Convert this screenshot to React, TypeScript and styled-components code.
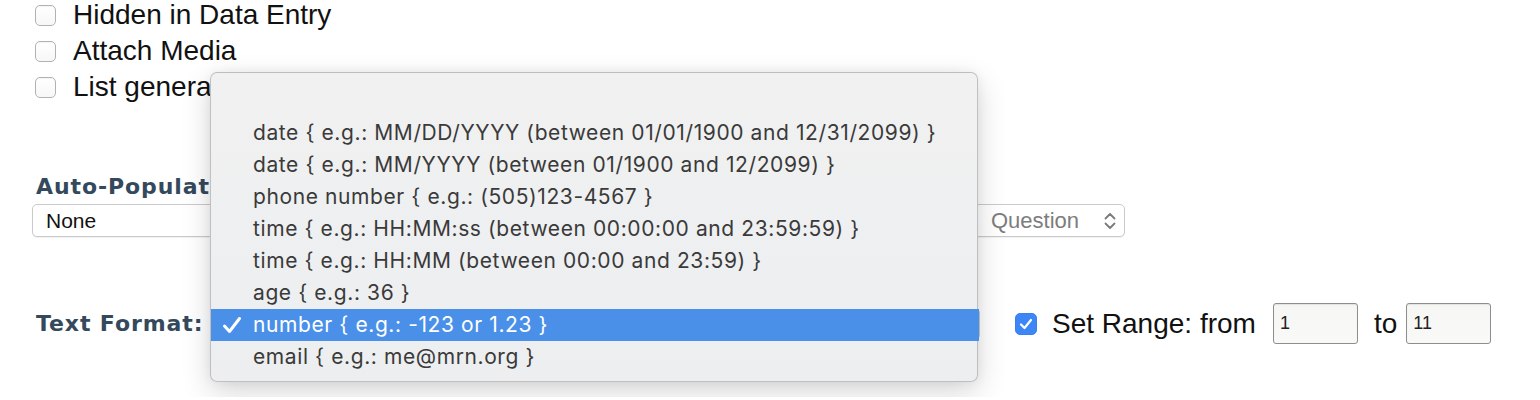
import React from "react";
import styled, { createGlobalStyle } from "styled-components";

const Global = createGlobalStyle`
  html, body { margin: 0; padding: 0; background: #ffffff; }
  body { font-family: "Liberation Sans", Arial, sans-serif; overflow: hidden; }
`;

const Page = styled.div`
  position: relative;
  width: 1540px;
  height: 400px;
  padding-left: 32px;
  box-sizing: border-box;
  background: #fff;
`;

const CheckList = styled.div`
  display: flex;
  flex-direction: column;
  margin-top: -3px;
  margin-left: 3px;
`;

const CheckRow = styled.label`
  display: flex;
  align-items: center;
  height: 36px;
  gap: 17px;
  font-size: 28px;
  color: #111;
  white-space: nowrap;
`;

const Box = styled.span<{ $checked?: boolean }>`
  flex: none;
  width: ${(p) => (p.$checked ? 22 : 21)}px;
  height: ${(p) => (p.$checked ? 22 : 21)}px;
  box-sizing: border-box;
  border-radius: 5px;
  border: 1px solid ${(p) => (p.$checked ? "#3a80f3" : "#b2b2b2")};
  background: ${(p) => (p.$checked ? "#3d86f6" : "linear-gradient(#ffffff, #f7f7f7)")};
  box-shadow: ${(p) => (p.$checked ? "none" : "inset 0 1px 1px rgba(0,0,0,0.04)")};
  display: flex;
  align-items: center;
  justify-content: center;
`;

const Section = styled.div`
  margin-top: 70px;
  display: flex;
  flex-direction: column;
`;

const FieldLabel = styled.div<{ $width?: number }>`
  font-family: "DejaVu Sans", Verdana, sans-serif;
  font-weight: bold;
  font-size: 22px;
  letter-spacing: 0.9px;
  line-height: 24px;
  color: #34495c;
  margin-left: 4px;
  white-space: nowrap;
  flex: none;
  ${(p) => (p.$width ? `width: ${p.$width}px;` : "")}
`;

const SelectRow = styled.div`
  display: flex;
  gap: 12px;
  width: 1093px;
  margin-top: 5px;
`;

const Select = styled.div<{ $width?: number; $muted?: boolean }>`
  ${(p) => (p.$width ? `width: ${p.$width}px; flex: none;` : "flex: 1;")}
  height: 33px;
  box-sizing: border-box;
  border: 1px solid #cacaca;
  border-radius: 5px;
  background: #fff;
  box-shadow: 0 1px 1px rgba(0, 0, 0, 0.06);
  display: flex;
  align-items: center;
  justify-content: space-between;
  padding: 0 7px 0 13px;
  font-size: ${(p) => (p.$muted ? 22 : 21)}px;
  color: ${(p) => (p.$muted ? "#7d7d7d" : "#111")};
`;

const QuestionText = styled.span`
  margin-left: auto;
  margin-right: 24px;
`;

const FormatRow = styled.div`
  display: flex;
  align-items: center;
  height: 41px;
  margin-top: 66px;
`;

const Anchor = styled.div`
  position: relative;
  flex: none;
  width: 770px;
  height: 32px;
`;

const HiddenSelect = styled.div`
  width: 100%;
  height: 32px;
  border: 1px solid #cacaca;
  border-radius: 5px;
  box-sizing: border-box;
  background: #fff;
`;

const Menu = styled.div`
  position: absolute;
  left: 0;
  top: -236px;
  width: 768px;
  box-sizing: border-box;
  padding: 12px 0 8px;
  background: linear-gradient(#f1f1f1, #eceef0);
  border: 1px solid rgba(0, 0, 0, 0.2);
  border-radius: 7px;
  box-shadow: 0 10px 30px rgba(0, 0, 0, 0.16), 0 0 12px rgba(0, 0, 0, 0.06);
  z-index: 10;
`;

const Item = styled.div<{ $selected?: boolean }>`
  position: relative;
  height: 32px;
  display: flex;
  align-items: center;
  padding-left: 42px;
  margin-right: ${(p) => (p.$selected ? "-2px" : "0")};
  font-family: Inter, "Noto Sans", sans-serif;
  font-size: 21px;
  letter-spacing: 0.6px;
  color: ${(p) => (p.$selected ? "#ffffff" : "#3a3a3a")};
  background: ${(p) => (p.$selected ? "#4a90e9" : "transparent")};
  white-space: nowrap;
`;

const Check = styled.svg`
  position: absolute;
  left: 11px;
  top: 7px;
`;

const RangeBox = styled.div`
  display: flex;
  align-items: center;
  margin-left: 35px;
  font-size: 28px;
  color: #111;
`;

const RangeText = styled.span<{ $ml: number; $mr: number }>`
  margin-left: ${(p) => p.$ml}px;
  margin-right: ${(p) => p.$mr}px;
  white-space: nowrap;
`;

const NumInput = styled.div<{ $width: number }>`
  width: ${(p) => p.$width}px;
  height: 41px;
  box-sizing: border-box;
  border: 1px solid #8e8e8e;
  border-radius: 3px;
  background: linear-gradient(#f6f6f4, #f9f9f7);
  display: flex;
  align-items: center;
  padding-left: 6px;
  font-size: 18px;
  color: #222;
  box-shadow: inset 0 1px 1px rgba(0, 0, 0, 0.08);
`;

const options = [
  "",
  "date { e.g.: MM/DD/YYYY (between 01/01/1900 and 12/31/2099) }",
  "date { e.g.: MM/YYYY (between 01/1900 and 12/2099) }",
  "phone number { e.g.: (505)123-4567 }",
  "time { e.g.: HH:MM:ss (between 00:00:00 and 23:59:59) }",
  "time { e.g.: HH:MM (between 00:00 and 23:59) }",
  "age { e.g.: 36 }",
  "number { e.g.: -123 or 1.23 }",
  "email { e.g.: me@mrn.org }",
];
const selectedIndex = 7;

const Chevrons = () => (
  <svg width="14" height="20" viewBox="0 0 14 20" fill="none" stroke="#7a7a7a" strokeWidth="1.8" strokeLinecap="round" strokeLinejoin="round">
    <path d="M2.5 7.5 L7 3 L11.5 7.5" />
    <path d="M2.5 12.5 L7 17 L11.5 12.5" />
  </svg>
);

export default function App() {
  return (
    <>
      <Global />
      <Page>
        <CheckList>
          <CheckRow><Box />Hidden in Data Entry</CheckRow>
          <CheckRow><Box />Attach Media</CheckRow>
          <CheckRow><Box />List generated from previous answers</CheckRow>
        </CheckList>

        <Section>
          <FieldLabel>Auto-Populate</FieldLabel>
          <SelectRow>
            <Select $width={540}>None</Select>
            <Select $muted>
              <QuestionText>Question</QuestionText>
              <Chevrons />
            </Select>
          </SelectRow>
        </Section>

        <FormatRow>
          <FieldLabel $width={174}>Text Format:</FieldLabel>
          <Anchor>
            <HiddenSelect />
            <Menu>
              {options.map((o, i) => (
                <Item key={i} $selected={i === selectedIndex}>
                  {i === selectedIndex && (
                    <Check width="20" height="18" viewBox="0 0 20 18" fill="none" stroke="#fff" strokeWidth="3" strokeLinecap="round" strokeLinejoin="round">
                      <path d="M2.5 10 L7.5 15.5 L17.5 2.5" />
                    </Check>
                  )}
                  {o}
                </Item>
              ))}
            </Menu>
          </Anchor>
          <RangeBox>
            <Box $checked>
              <svg width="14" height="12" viewBox="0 0 14 12" fill="none" stroke="#fff" strokeWidth="2.2" strokeLinecap="round" strokeLinejoin="round">
                <path d="M2 6.5 L5.5 10 L12 2" />
              </svg>
            </Box>
            <RangeText $ml={15} $mr={17}>Set Range: from</RangeText>
            <NumInput $width={85}>1</NumInput>
            <RangeText $ml={16} $mr={9}>to</RangeText>
            <NumInput $width={85}>11</NumInput>
          </RangeBox>
        </FormatRow>
      </Page>
    </>
  );
}
